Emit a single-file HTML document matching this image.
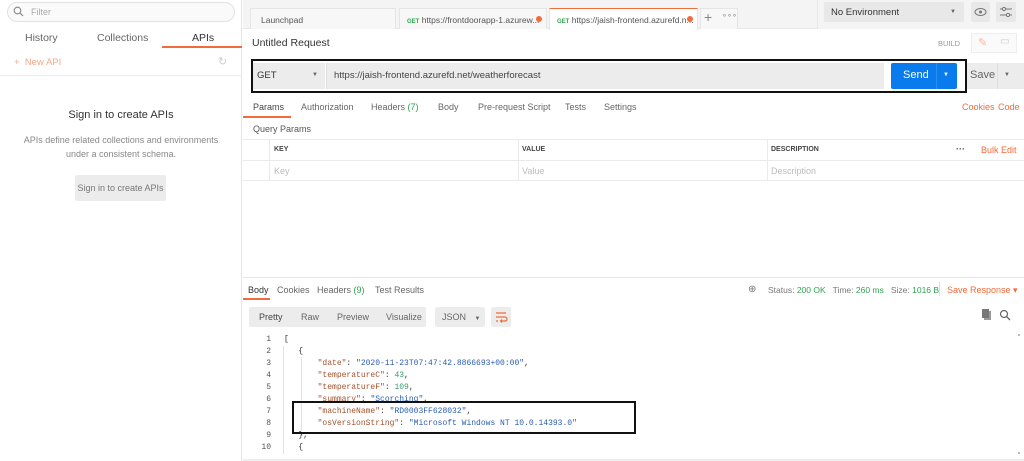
<!DOCTYPE html><html><head><style>
*{box-sizing:border-box;margin:0;padding:0}
html,body{width:1024px;height:461px;overflow:hidden}
body{background:#fff;font-family:"Liberation Sans",sans-serif;font-size:9px;color:#505050;position:relative}
.a{position:absolute;white-space:nowrap}
.mono{font-family:"Liberation Mono",monospace;font-size:8px}
.k{color:#a0522d}.s{color:#2a5db0}.n{color:#3a9a6a}
</style></head><body>
<div class="a" style="left:0;top:0;width:242px;height:461px;background:#fff;border-right:1px solid #e4e4e4"></div>
<div class="a" style="left:7px;top:2px;width:228px;height:20px;border:1px solid #e2e2e2;border-radius:10px;background:#fafafa"></div>
<svg class="a" style="left:13px;top:6px" width="11" height="11"><circle cx="4.5" cy="4.5" r="3.3" fill="none" stroke="#888" stroke-width="1.1"/><line x1="7" y1="7" x2="10" y2="10" stroke="#888" stroke-width="1.2"/></svg>
<div class="a" style="left:31px;top:7px;color:#aaa">Filter</div>
<div class="a" style="left:25px;top:32px;font-size:10.5px;color:#666">History</div>
<div class="a" style="left:97px;top:32px;font-size:10.5px;color:#666">Collections</div>
<div class="a" style="left:192px;top:32px;font-size:10.5px;color:#333">APIs</div>
<div class="a" style="left:162px;top:46px;width:80px;height:2px;background:#f26b3a"></div>
<div class="a" style="left:14px;top:57px;color:#f4a98a;font-size:9.5px">+&nbsp; New API</div>
<div class="a" style="left:218px;top:55px;color:#ccc;font-size:11px">↻</div>
<div class="a" style="left:0;top:75px;width:242px;height:1px;background:#ececec"></div>
<div class="a" style="left:0;top:109px;width:242px;text-align:center;font-size:11px;color:#333">Sign in to create APIs</div>
<div class="a" style="left:0;top:133px;width:242px;text-align:center;color:#888;line-height:14px">APIs define related collections and environments<br>under a consistent schema.</div>
<div class="a" style="left:75px;top:175px;width:91px;height:26px;background:#ececec;border-radius:2px;color:#777;text-align:center;line-height:26px">Sign in to create APIs</div>
<div class="a" style="left:243px;top:0;width:781px;height:29px;background:#f4f4f4;border-bottom:1px solid #e8e8e8"></div>
<div class="a" style="left:250px;top:8px;width:146px;height:21px;background:#f7f7f7;border:1px solid #e5e5e5;border-bottom:none;padding:6px 10px;color:#555;font-size:8.5px">Launchpad</div>
<div class="a" style="left:399px;top:8px;width:148px;height:21px;background:#f7f7f7;border:1px solid #e5e5e5;border-bottom:none;padding:6px 7px;color:#555;font-size:8.5px;overflow:hidden"><b style="color:#2fa34e;font-size:6px">GET</b> https://frontdoorapp-1.azurew...</div>
<div class="a" style="left:536px;top:16px;width:6px;height:6px;border-radius:3px;background:#f26b3a"></div>
<div class="a" style="left:549px;top:8px;width:149px;height:22px;background:#fff;border-top:1px solid #f26b3a;border-left:1px solid #e5e5e5;border-right:1px solid #e5e5e5;padding:6px 7px;color:#555;font-size:8.5px;overflow:hidden"><b style="color:#2fa34e;font-size:6px">GET</b> https://jaish-frontend.azurefd.n...</div>
<div class="a" style="left:687px;top:16px;width:6px;height:6px;border-radius:3px;background:#f26b3a"></div>
<div class="a" style="left:700px;top:8px;width:38px;height:21px;background:#f7f7f7;border:1px solid #e5e5e5;border-bottom:none"></div>
<div class="a" style="left:704px;top:9px;font-size:14px;color:#888">+</div>
<div class="a" style="left:722px;top:11px;font-size:8px;color:#888">∘∘∘</div>
<div class="a" style="left:817px;top:0;width:207px;height:29px;background:#f4f4f4;border-left:1px solid #e8e8e8"></div>
<div class="a" style="left:824px;top:2px;width:140px;height:20px;background:#e8e8e8;border-radius:2px;padding:5px 7px;color:#333;font-size:9.5px">No Environment</div>
<div class="a" style="left:950px;top:9px;font-size:6px;color:#666">▼</div>
<div class="a" style="left:971px;top:2px;width:19px;height:20px;background:#e8e8e8;border-radius:2px"></div>
<svg class="a" style="left:974px;top:7px" width="13" height="10"><ellipse cx="6.5" cy="5" rx="5.5" ry="3.5" fill="none" stroke="#777"/><circle cx="6.5" cy="5" r="1.5" fill="#777"/></svg>
<div class="a" style="left:996px;top:2px;width:20px;height:20px;background:#e8e8e8;border-radius:2px"></div>
<svg class="a" style="left:999px;top:6px" width="14" height="12"><path d="M1 3H13M1 9H13" stroke="#777"/><circle cx="5" cy="3" r="1.6" fill="#e8e8e8" stroke="#777"/><circle cx="9" cy="9" r="1.6" fill="#e8e8e8" stroke="#777"/></svg>
<div class="a" style="left:252px;top:37px;font-size:10.5px;color:#333">Untitled Request</div>
<div class="a" style="left:938px;top:39px;font-size:7.5px;color:#999">BUILD</div>
<div class="a" style="left:971px;top:33px;width:46px;height:20px;border:1px solid #eee;background:#fafafa"></div>
<div class="a" style="left:978px;top:36px;color:#f6b7a0;font-size:11px">✎</div>
<div class="a" style="left:1000px;top:36px;color:#ccc;font-size:10px">▭</div>
<div class="a" style="left:251px;top:59px;width:716px;height:34px;border:2px solid #111"></div>
<div class="a" style="left:253px;top:63px;width:72px;height:26px;background:#ececec;padding:7px 4px;color:#333;font-size:9.5px">GET</div>
<div class="a" style="left:312px;top:72px;font-size:6px;color:#666">▼</div>
<div class="a" style="left:326px;top:63px;width:558px;height:26px;background:#ececec;border-left:1px solid #ddd;padding:7px 7px;color:#444;font-size:9.5px">https://jaish-frontend.azurefd.net/weatherforecast</div>
<div class="a" style="left:891px;top:63px;width:66px;height:26px;background:#097bed;border-radius:2px"></div>
<div class="a" style="left:903px;top:69px;color:#fff;font-size:11px">Send</div>
<div class="a" style="left:936px;top:63px;width:1px;height:26px;background:#2a8ef0"></div>
<div class="a" style="left:943px;top:72px;color:#fff;font-size:6px">▼</div>
<div class="a" style="left:967px;top:63px;width:57px;height:26px;background:#ececec"></div>
<div class="a" style="left:970px;top:69px;color:#666;font-size:11px">Save</div>
<div class="a" style="left:997px;top:63px;width:1px;height:26px;background:#ddd"></div>
<div class="a" style="left:1004px;top:72px;color:#666;font-size:6px">▼</div>
<div class="a" style="left:253px;top:102px;color:#444">Params</div>
<div class="a" style="left:243px;top:116px;width:48px;height:2px;background:#f26b3a"></div>
<div class="a" style="left:301px;top:102px;color:#666">Authorization</div>
<div class="a" style="left:371px;top:102px;color:#666">Headers <span style="color:#2fa34e">(7)</span></div>
<div class="a" style="left:438px;top:102px;color:#666">Body</div>
<div class="a" style="left:478px;top:102px;color:#666">Pre-request Script</div>
<div class="a" style="left:565px;top:102px;color:#666">Tests</div>
<div class="a" style="left:604px;top:102px;color:#666">Settings</div>
<div class="a" style="left:962px;top:102px;color:#f26b3a">Cookies</div>
<div class="a" style="left:998px;top:102px;color:#f26b3a">Code</div>
<div class="a" style="left:253px;top:124px;color:#555">Query Params</div>
<div class="a" style="left:243px;top:139px;width:781px;height:1px;background:#eaeaea"></div>
<div class="a" style="left:243px;top:160px;width:781px;height:1px;background:#eaeaea"></div>
<div class="a" style="left:243px;top:180px;width:781px;height:1px;background:#eaeaea"></div>
<div class="a" style="left:269px;top:140px;width:1px;height:40px;background:#eaeaea"></div>
<div class="a" style="left:518px;top:140px;width:1px;height:40px;background:#eaeaea"></div>
<div class="a" style="left:767px;top:140px;width:1px;height:40px;background:#eaeaea"></div>
<div class="a" style="left:274px;top:146px;font-size:7px;font-weight:bold;color:#444">KEY</div>
<div class="a" style="left:522px;top:146px;font-size:7px;font-weight:bold;color:#444">VALUE</div>
<div class="a" style="left:771px;top:146px;font-size:7px;font-weight:bold;color:#444">DESCRIPTION</div>
<div class="a" style="left:956px;top:144px;font-size:9px;color:#555;font-weight:bold">···</div>
<div class="a" style="left:981px;top:145px;color:#f26b3a">Bulk Edit</div>
<div class="a" style="left:274px;top:166px;color:#bbb">Key</div>
<div class="a" style="left:522px;top:166px;color:#bbb">Value</div>
<div class="a" style="left:771px;top:166px;color:#bbb">Description</div>
<div class="a" style="left:243px;top:277px;width:781px;height:1px;background:#e4e4e4"></div>
<div class="a" style="left:248px;top:285px;color:#333">Body</div>
<div class="a" style="left:243px;top:298px;width:27px;height:2px;background:#f26b3a"></div>
<div class="a" style="left:277px;top:285px;color:#666">Cookies</div>
<div class="a" style="left:317px;top:285px;color:#666">Headers <span style="color:#2fa34e">(9)</span></div>
<div class="a" style="left:375px;top:285px;color:#666">Test Results</div>
<div class="a" style="left:748px;top:284px;color:#777;font-size:10px">⊕</div>
<div class="a" style="left:768px;top:285px;color:#777;font-size:8.5px">Status: <span style="color:#2fa34e">200 OK</span>&nbsp;&nbsp; Time: <span style="color:#2fa34e">260 ms</span>&nbsp;&nbsp; Size: <span style="color:#2fa34e">1016 B</span></div>
<div class="a" style="left:939px;top:282px;width:1px;height:14px;background:#ddd"></div>
<div class="a" style="left:947px;top:285px;color:#f26b3a">Save Response ▾</div>
<div class="a" style="left:249px;top:307px;width:177px;height:20px;background:#ececec;border-radius:2px"></div>
<div class="a" style="left:259px;top:312px;color:#444">Pretty</div>
<div class="a" style="left:301px;top:312px;color:#666">Raw</div>
<div class="a" style="left:337px;top:312px;color:#666">Preview</div>
<div class="a" style="left:386px;top:312px;color:#666">Visualize</div>
<div class="a" style="left:435px;top:307px;width:50px;height:20px;background:#ececec;border-radius:2px;padding:5px 7px;color:#666">JSON <span style="font-size:6px;margin-left:6px">▼</span></div>
<div class="a" style="left:491px;top:307px;width:20px;height:20px;background:#ececec;border-radius:2px"></div>
<svg class="a" style="left:494px;top:310px" width="14" height="14"><path d="M2 3H12M2 7H11a2 2 0 0 1 0 4H7M2 11H4M8 9.5L6.5 11L8 12.5" stroke="#f26b3a" fill="none" stroke-width="1.2"/></svg>
<div class="a" style="left:982px;top:309px;width:7px;height:9px;background:#777;box-shadow:2px 2px 0 #999"></div>
<svg class="a" style="left:999px;top:309px" width="12" height="12"><circle cx="5" cy="5" r="3.5" fill="none" stroke="#666" stroke-width="1.2"/><line x1="7.5" y1="7.5" x2="11" y2="11" stroke="#666" stroke-width="1.3"/></svg>
<div class="a" style="left:1018px;top:334px;width:2px;height:2px;background:#bbb"></div>
<div class="a" style="left:1018px;top:452px;width:2px;height:2px;background:#bbb"></div>
<div class="a" style="left:243px;top:459px;width:781px;height:2px;background:#eee"></div>
<div class="a" style="left:283px;top:346px;width:1px;height:108px;background:#e2e2e2"></div>
<div class="a" style="left:301px;top:357px;width:1px;height:74px;background:#e2e2e2"></div>
<div class="a mono" style="left:255px;top:334px;line-height:12px;color:#555;text-align:right;width:16px">1<br>2<br>3<br>4<br>5<br>6<br>7<br>8<br>9<br>10</div>
<div class="a mono" style="left:284px;top:334px;line-height:12px;color:#333">[<br>&nbsp;&nbsp;&nbsp;{<br>&nbsp;&nbsp;&nbsp;&nbsp;&nbsp;&nbsp;&nbsp;<span class="k">"date"</span>: <span class="s">"2020-11-23T07:47:42.8866693+00:00"</span>,<br>&nbsp;&nbsp;&nbsp;&nbsp;&nbsp;&nbsp;&nbsp;<span class="k">"temperatureC"</span>: <span class="n">43</span>,<br>&nbsp;&nbsp;&nbsp;&nbsp;&nbsp;&nbsp;&nbsp;<span class="k">"temperatureF"</span>: <span class="n">109</span>,<br>&nbsp;&nbsp;&nbsp;&nbsp;&nbsp;&nbsp;&nbsp;<span class="k">"summary"</span>: <span class="s">"Scorching"</span>,<br>&nbsp;&nbsp;&nbsp;&nbsp;&nbsp;&nbsp;&nbsp;<span class="k">"machineName"</span>: <span class="s">"RD0003FF628032"</span>,<br>&nbsp;&nbsp;&nbsp;&nbsp;&nbsp;&nbsp;&nbsp;<span class="k">"osVersionString"</span>: <span class="s">"Microsoft Windows NT 10.0.14393.0"</span><br>&nbsp;&nbsp;&nbsp;},<br>&nbsp;&nbsp;&nbsp;{</div>
<div class="a" style="left:292px;top:401px;width:344px;height:33px;border:2px solid #111"></div>
</body></html>
